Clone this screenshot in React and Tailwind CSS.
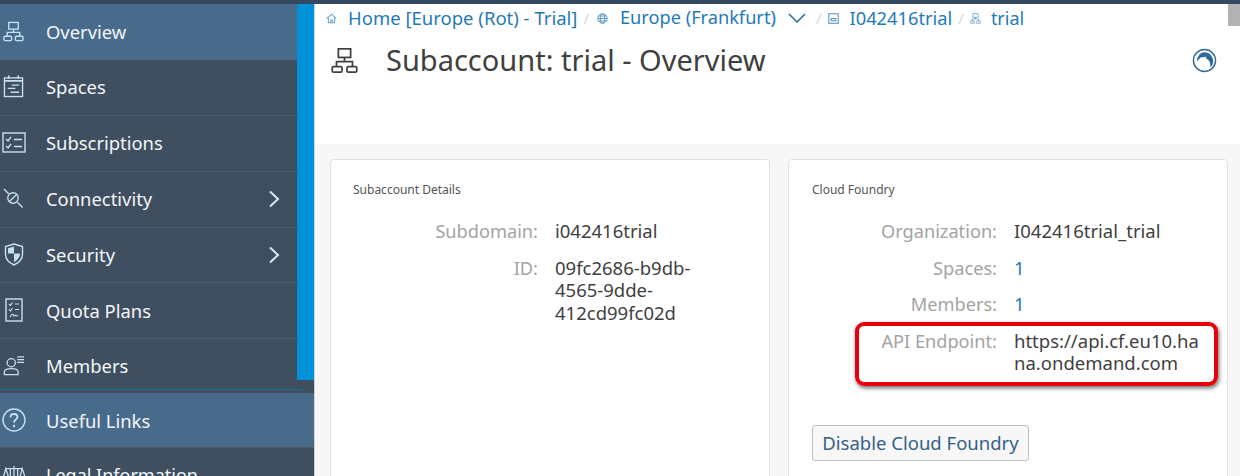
const S = { fill: "none", stroke: "currentColor", strokeWidth: 1.4 };

function OrgIcon({ className }) {
  return (
    <svg viewBox="0 0 22 22" className={className} {...S}>
      <rect x="6" y="1.500" width="10" height="7" />
      <path d="M11 8.500V12M4.500 16V12H17.500V16" />
      <rect x="1" y="16" width="8" height="4.500" rx="1" />
      <rect x="13" y="16" width="8" height="4.500" rx="1" />
    </svg>
  );
}

function SpacesIcon({ className }) {
  return (
    <svg viewBox="0 0 22 24" className={className} {...S}>
      <rect x="1.500" y="3" width="19" height="19.500" />
      <path d="M6 0.500V4M16 0.500V4M1.500 6H20.500" strokeWidth="1.800" />
      <path d="M9 10.500H17M5 14H13M8 18H17" />
    </svg>
  );
}

function SubsIcon({ className }) {
  return (
    <svg viewBox="0 0 24 21" className={className} {...S}>
      <rect x="1" y="1" width="22" height="19" />
      <path d="M4 7L6 9L9 5M4 14L6 16L9 12M12 7.500H20M12 14.500H20" />
    </svg>
  );
}

function PlugIcon({ className }) {
  return (
    <svg viewBox="0 0 22 22" className={className} {...S}>
      <path d="M1 1L6 6M15 15L20.500 20.500" />
      <circle cx="10.500" cy="10.500" r="5.500" />
      <path d="M14.500 6.500L6.500 14.500" />
    </svg>
  );
}

function ShieldIcon({ className }) {
  return (
    <svg viewBox="0 0 20 23" className={className} {...S}>
      <path d="M10 1L18.500 3.500V11C18.500 16 14.500 20 10 22C5.500 20 1.500 16 1.500 11V3.500Z" />
      <path d="M10 3.500L4 5.200V10.500H10Z M10 10.500H16C16 14.500 13 17.500 10 19.300Z" fill="currentColor" stroke="none" />
    </svg>
  );
}

function QuotaIcon({ className }) {
  return (
    <svg viewBox="0 0 18 24" className={className} {...S}>
      <rect x="1" y="1" width="16" height="22" />
      <path d="M4 6L5.500 7.500L7.500 4.500M10 6H14M4 11.500L5.500 13L7.500 10M10 11.500H14M5 19C7 16 8 15 9 18C10 17 11 17 13 18" strokeWidth="1.100" />
    </svg>
  );
}

function MembersIcon({ className }) {
  return (
    <svg viewBox="0 0 24 22" className={className} {...S}>
      <circle cx="9" cy="8" r="4.500" />
      <path d="M1.500 21V18C1.500 15.500 4 14.500 9 14.500C14 14.500 16.500 15.500 16.500 18V21Z" />
      <path d="M15.500 1.500H23M15.500 4.500H23M15.500 7.500H23" />
    </svg>
  );
}

function HelpIcon({ className }) {
  return (
    <svg viewBox="0 0 24 24" className={className} {...S}>
      <circle cx="12" cy="12" r="11" />
      <path d="M8.500 9.500C8.500 7 10 6 12 6C14 6 15.500 7.200 15.500 9C15.500 11.500 12 11.500 12 14.500" strokeWidth="1.800" />
      <circle cx="12" cy="18" r="1.200" fill="currentColor" stroke="none" />
    </svg>
  );
}

function ScaleIcon({ className }) {
  return (
    <svg viewBox="0 0 24 24" className={className} {...S}>
      <path d="M12 1V23M3 4H21M3 4L0.500 13H6ZM21 4L18.500 13H24ZM7 23H17" />
      <path d="M8 4V12M16 4V12" />
    </svg>
  );
}

function Chevron() {
  return (
    <svg viewBox="0 0 12 18" className="w-[12px] h-[18px] ml-auto mr-[17px] text-[#d1e8fb]" fill="none" stroke="currentColor" strokeWidth="2">
      <path d="M2 1.500L10 9L2 16.500" />
    </svg>
  );
}

function NavRow({ icon, label, chevron, active }) {
  return (
    <div className={`flex items-center shrink-0 h-[55.900px] pb-[1px] ${active ? "bg-[#496b8b]" : "border-b border-[#4a5b6c]"}`}>
      <div className="w-[46px] flex justify-center pr-[20px] pl-[1px] text-[#c5dff5] shrink-0">{icon}</div>
      <span className="text-[18.400px] text-[#f2f6fa]">{label}</span>
      {chevron && <Chevron />}
    </div>
  );
}

function Field({ label, children, className = "" }) {
  return (
    <div className={`flex text-[18.500px] leading-[22.500px] ${className}`}>
      <div className="text-[18.200px] text-[#a3a3a3] text-right shrink-0 w-[207px]">{label}</div>
      <div className="ml-[17px] text-[#3f3f3f] w-[170px]">{children}</div>
    </div>
  );
}

export default function App() {
  return (
    <div className="w-[1240px] h-[476px] overflow-hidden flex flex-col bg-white font-['Noto_Sans',sans-serif]">
      <div className="h-[4px] bg-[#354a5f] shrink-0" />
      <div className="flex flex-1 min-h-0">
        <aside className="w-[314px] shrink-0 bg-[#3f4f5f] flex flex-col border-r border-[#d5d5d5] box-content">
          <div className="flex items-start shrink-0">
            <nav className="w-[297px] flex flex-col">
              <NavRow active icon={<OrgIcon className="w-[21px] h-[21px]" />} label="Overview" />
              <NavRow icon={<SpacesIcon className="w-[21px] h-[23px]" />} label="Spaces" />
              <NavRow icon={<SubsIcon className="w-[24px] h-[21px]" />} label="Subscriptions" />
              <NavRow icon={<PlugIcon className="w-[21px] h-[21px]" />} label="Connectivity" chevron />
              <NavRow icon={<ShieldIcon className="w-[20px] h-[23px]" />} label="Security" chevron />
              <NavRow icon={<QuotaIcon className="w-[18px] h-[24px]" />} label="Quota Plans" />
              <div className="flex items-center shrink-0 h-[50px] pt-[3px]">
                <div className="w-[46px] flex justify-center pr-[20px] pl-[1px] text-[#c5dff5] shrink-0">
                  <MembersIcon className="w-[22px] h-[21px]" />
                </div>
                <span className="text-[18.400px] text-[#f2f6fa]">Members</span>
              </div>
            </nav>
            <div className="w-[17px] h-[376px] bg-[#0092d8]" />
          </div>
          <div className="shrink-0 border-b border-[#14708f] w-[303px]" />
          <div className="h-[3px] shrink-0" />
          <div className="flex items-center h-[55px] shrink-0 bg-[#496b8b] border-b border-[#4a5b6c]">
            <div className="w-[46px] flex justify-center pr-[20px] pl-[1px] text-[#c5dff5] shrink-0">
              <HelpIcon className="w-[24px] h-[24px]" />
            </div>
            <span className="text-[18.400px] text-[#f2f6fa]">Useful Links</span>
          </div>
          <div className="flex items-center h-[55px] shrink-0">
            <div className="w-[46px] flex justify-center pr-[20px] pl-[1px] text-[#c5dff5] shrink-0">
              <ScaleIcon className="w-[22px] h-[22px]" />
            </div>
            <span className="text-[18px] text-[#f2f6fa]">Legal Information</span>
          </div>
        </aside>

        <main className="flex-1 min-w-0 relative flex flex-col">
          <div className="absolute right-0 top-0 w-[12px] h-[22px] bg-[#b3b3b3]" />
          <header className="h-[140px] shrink-0 bg-white pl-[11px] pt-[3px]">
            <div className="flex items-center h-[22px] text-[18.500px] text-[#1f7ab8] whitespace-nowrap">
              <svg viewBox="0 0 14 14" className="w-[11px] h-[11px] text-[#6aa6cf]" fill="none" stroke="currentColor" strokeWidth="1.300">
                <path d="M1 7L7 1.500L13 7M3 6V12.500H11V6M6 12.500V9H8V12.500" />
              </svg>
              <span className="ml-[11px]">Home [Europe (Rot) - Trial]</span>
              <span className="ml-[6px] text-[#d8d8d8] text-[15px]">/</span>
              <svg viewBox="0 0 14 14" className="ml-[8px] w-[11px] h-[11px] text-[#4f8fbd]" fill="none" stroke="currentColor" strokeWidth="1.100">
                <circle cx="7" cy="7" r="6" />
                <ellipse cx="7" cy="7" rx="2.800" ry="6" />
                <path d="M1 7H13M2 3.800H12M2 10.200H12" />
              </svg>
              <span className="ml-[12px] text-[18.200px]">Europe (Frankfurt)</span>
              <svg viewBox="0 0 18 10" className="ml-[12px] w-[18px] h-[10px] text-[#1f6ea6]" fill="none" stroke="currentColor" strokeWidth="1.500">
                <path d="M1 1L9 9L17 1" />
              </svg>
              <span className="ml-[10px] text-[#d8d8d8] text-[15px]">/</span>
              <svg viewBox="0 0 14 14" className="ml-[6px] w-[11px] h-[11px] text-[#4f8fbd]" fill="none" stroke="currentColor" strokeWidth="1.300">
                <path d="M1 1H13V13H1ZM4 7H10V10H4Z" />
              </svg>
              <span className="ml-[11px] text-[18.300px]">I042416trial</span>
              <span className="ml-[6px] text-[#d8d8d8] text-[15px]">/</span>
              <OrgIcon className="ml-[6px] w-[11px] h-[11px] text-[#4f8fbd]" />
              <span className="ml-[10px] text-[18px]">trial</span>
            </div>
            <div className="flex items-center mt-[8px] h-[46px]">
              <OrgIcon className="ml-[5px] w-[27px] h-[27px] text-[#3f3f3f]" />
              <h1 className="ml-[28px] text-[29px] font-normal text-[#3f3f3f] whitespace-nowrap">Subaccount: trial - Overview</h1>
              <svg viewBox="0 0 26 26" className="ml-auto mr-[23px] w-[25px] h-[25px] text-[#31699a]">
                <circle cx="13" cy="13" r="11.500" fill="none" stroke="currentColor" strokeWidth="1.500" />
                <path d="M5 14C5.500 8 9 4.500 13 4.500C18.500 4.500 22 9 22 14C22 17 20.500 19 19 20C19.500 15 17.500 12 15 11.500L14.500 9L9 10L5 14Z" fill="currentColor" />
              </svg>
            </div>
          </header>
          <div className="flex-1 min-h-0 bg-[#f7f7f7] flex items-start gap-[18px] pl-[15px] pt-[15px]">
            <section className="w-[440px] h-[340px] shrink-0 bg-white border border-[#e2e2e2] rounded-[4px] pt-[22px]">
              <h2 className="pl-[22px] text-[12px] leading-[16px] font-normal text-[#555555]">Subaccount Details</h2>
              <Field label="Subdomain:" className="mt-[22px]">i042416trial</Field>
              <Field label="ID:" className="mt-[14px]">
                09fc2686-b9db-<br />4565-9dde-<br />412cd99fc02d
              </Field>
            </section>
            <section className="relative w-[440px] h-[340px] shrink-0 bg-white border border-[#e2e2e2] rounded-[4px] pt-[22px]">
              <h2 className="pl-[23px] text-[12px] leading-[16px] font-normal text-[#555555]">Cloud Foundry</h2>
              <Field label="Organization:" className="mt-[22px] pl-[1px]">I042416trial_trial</Field>
              <Field label="Spaces:" className="mt-[14px] pl-[1px]"><span className="text-[#1f7ab8]">1</span></Field>
              <Field label="Members:" className="mt-[14px] pl-[1px]"><span className="text-[#1f7ab8]">1</span></Field>
              <Field label="API Endpoint:" className="mt-[14px] pl-[1px]">https://api.cf.eu10.ha<br />na.ondemand.com</Field>
              <button className="block ml-[23px] mt-[50px] h-[36px] w-[217px] bg-[#f7f7f7] border border-[#bfbfbf] rounded-[3px] text-[18.500px] text-[#346187] whitespace-nowrap">Disable Cloud Foundry</button>
              <div className="absolute left-[66px] top-[162px] w-[363px] h-[64px] border-[4px] border-[#e8000b] rounded-[9px] shadow-[1px_2px_4px_rgba(0,0,0,0.6)]" />
            </section>
          </div>
        </main>
      </div>
    </div>
  );
}
